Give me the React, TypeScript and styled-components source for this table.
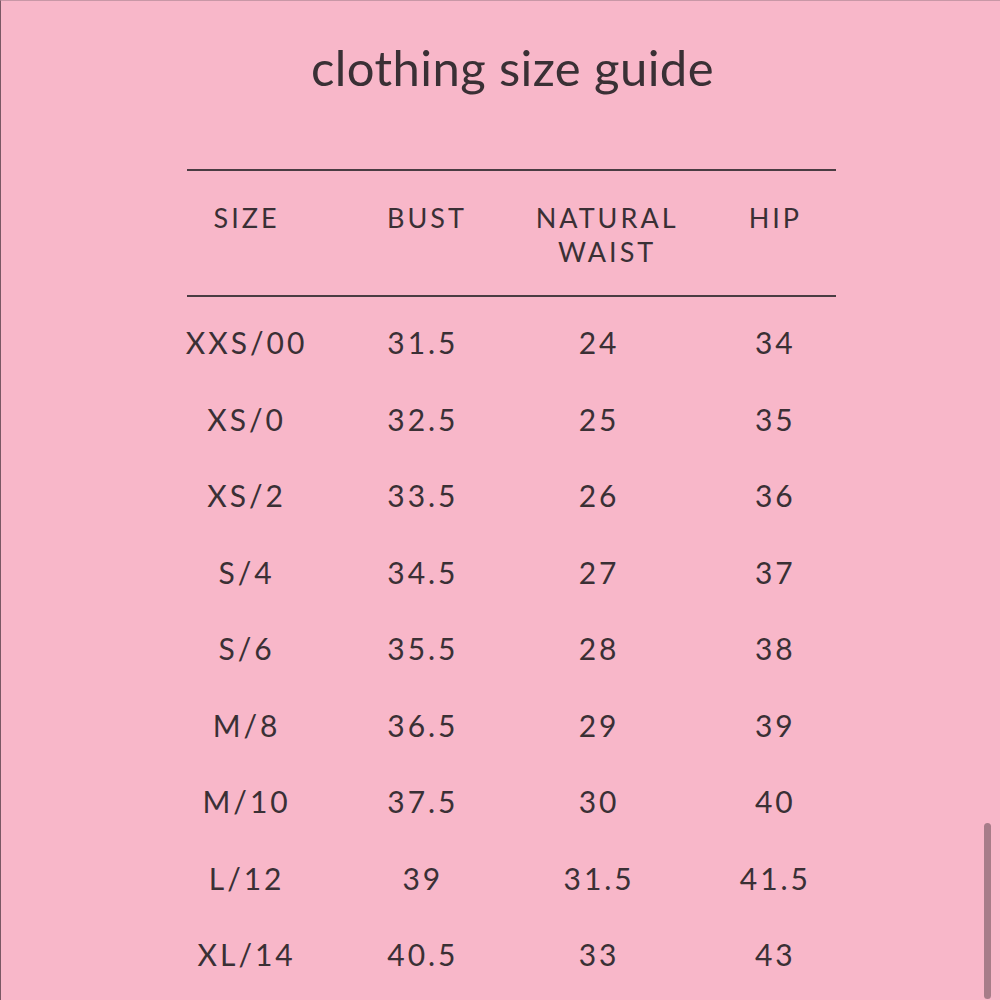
import React from "react";
import styled, { createGlobalStyle } from "styled-components";

const colors = {
  pink: "#f8b7c9",
  ink: "#3a3035",
  rule: "#4a3c42",
  thumb: "#a77c89",
};

const GlobalStyle = createGlobalStyle`
  html, body {
    margin: 0;
    padding: 0;
    background: ${colors.pink};
  }
  body {
    font-family: Lato, "Liberation Sans", sans-serif;
    color: ${colors.ink};
  }
`;

type SizeRow = {
  size: string;
  bust: string;
  waist: string;
  hip: string;
};

const rows: SizeRow[] = [
  { size: "XXS/00", bust: "31.5", waist: "24", hip: "34" },
  { size: "XS/0", bust: "32.5", waist: "25", hip: "35" },
  { size: "XS/2", bust: "33.5", waist: "26", hip: "36" },
  { size: "S/4", bust: "34.5", waist: "27", hip: "37" },
  { size: "S/6", bust: "35.5", waist: "28", hip: "38" },
  { size: "M/8", bust: "36.5", waist: "29", hip: "39" },
  { size: "M/10", bust: "37.5", waist: "30", hip: "40" },
  { size: "L/12", bust: "39", waist: "31.5", hip: "41.5" },
  { size: "XL/14", bust: "40.5", waist: "33", hip: "43" },
];

const App = () => {
  return (
    <>
      <GlobalStyle />
      <Page>
        <Title>clothing size guide</Title>
        <Table>
          <Head>
            <HeadGrid>
              <HeadCell>SIZE</HeadCell>
              <HeadCell $shift={4}>BUST</HeadCell>
              <HeadCell $shift={8}>
                NATURAL
                <br />
                WAIST
              </HeadCell>
              <HeadCell>HIP</HeadCell>
            </HeadGrid>
          </Head>
          <Body>
            {rows.map((row) => (
              <Row key={row.size}>
                <Cell>{row.size}</Cell>
                <Cell>{row.bust}</Cell>
                <Cell>{row.waist}</Cell>
                <Cell>{row.hip}</Cell>
              </Row>
            ))}
          </Body>
        </Table>
        <ScrollThumb />
      </Page>
    </>
  );
};

export default App;

const Page = styled.div`
  position: relative;
  width: 1000px;
  height: 1000px;
  box-sizing: border-box;
  overflow: hidden;
  background: ${colors.pink};
  border-left: 1px solid #7a5864;
  border-top: 1px solid #c897a6;
  display: flex;
  flex-direction: column;
  align-items: center;
`;

const Title = styled.h1`
  margin: 36px 0 0;
  font-size: 49px;
  font-weight: 400;
  line-height: 60px;
  letter-spacing: 0.4px;
  color: ${colors.ink};
  transform: translateX(12px);
`;

const Table = styled.div`
  width: 649px;
  margin-top: 72px;
  margin-left: 21px;
`;

const Head = styled.div`
  padding: 30px 0 26px;
  border-top: 2px solid ${colors.rule};
  border-bottom: 2px solid ${colors.rule};
`;

const HeadGrid = styled.div`
  display: grid;
  grid-template-columns: repeat(4, 1fr);
  margin: 0 -28px;
`;

const HeadCell = styled.div<{ $shift?: number }>`
  text-align: center;
  font-size: 27px;
  line-height: 34px;
  letter-spacing: 3px;
  font-weight: 400;
  transform: translateX(${(p) => p.$shift ?? 0}px);
`;

const Body = styled.div`
  margin: 7px -28px 0;
  display: flex;
  flex-direction: column;
`;

const Row = styled.div`
  display: grid;
  grid-template-columns: repeat(4, 1fr);
  height: 76.5px;
  align-items: center;
`;

const Cell = styled.div`
  text-align: center;
  font-size: 30px;
  letter-spacing: 3px;
  font-weight: 400;
`;

const ScrollThumb = styled.div`
  position: absolute;
  right: 9px;
  top: 822px;
  width: 7px;
  height: 176px;
  border-radius: 4px;
  background: ${colors.thumb};
`;
